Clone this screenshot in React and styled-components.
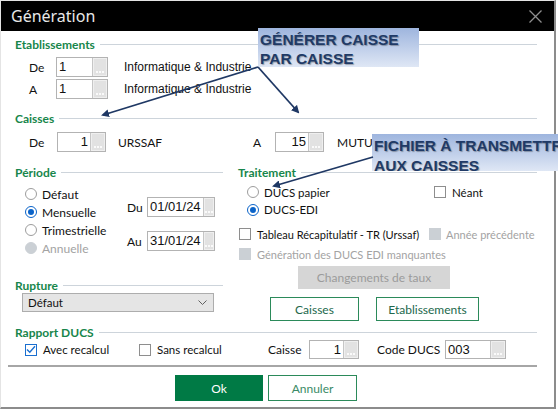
import React from "react";
import styled, { createGlobalStyle } from "styled-components";

const GREEN = "#17864b";

const GlobalStyle = createGlobalStyle`
  html, body {
    margin: 0;
    padding: 0;
    background: #fff;
    overflow: hidden;
  }
  body {
    font-family: Lato, "Noto Sans", sans-serif;
    font-size: 11px;
    color: #111;
  }
  * { box-sizing: border-box; }
`;

const Window = styled.div`
  position: relative;
  width: 556px;
  height: 409px;
  border-top: 1px solid #e4e4e4;
  border-left: 1px solid #e4e4e4;
  border-right: 2px solid #8c8c8c;
  border-bottom: 2px solid #8c8c8c;
  background: #fff;
`;

const TitleBar = styled.div`
  height: 30px;
  background: #000;
  display: flex;
  align-items: center;
  justify-content: space-between;
  padding: 0 12px 0 10px;
`;

const Title = styled.div`
  font-family: "Noto Sans", sans-serif;
  font-size: 16px;
  color: #e8e8e8;
`;

const Body = styled.div`
  padding: 6px 17px 0 14px;
`;

const HeaderRow = styled.div`
  display: flex;
  align-items: center;
  height: 14px;
  margin-top: ${(p) => p.$mt || 0}px;
`;

const HeaderText = styled.span`
  font-weight: 700;
  color: ${GREEN};
  font-size: 12px;
`;

const Rule = styled.span`
  flex: 1;
  height: 1px;
  background: #cdd4db;
  margin-left: 5px;
`;

const SectionHeader = ({ title, mt }) => (
  <HeaderRow $mt={mt}>
    <HeaderText>{title}</HeaderText>
    <Rule />
  </HeaderRow>
);

const Row = styled.div`
  display: flex;
  align-items: center;
  height: ${(p) => p.$h || 20}px;
  margin-top: ${(p) => p.$mt || 0}px;
  padding-left: ${(p) => p.$pl || 0}px;
`;

const Cell = styled.div`
  display: flex;
  align-items: center;
  flex: none;
  width: ${(p) => p.$w}px;
  white-space: nowrap;
`;

const Label = styled.span`
  flex: none;
  width: ${(p) => p.$w}px;
  margin-left: ${(p) => p.$ml || 0}px;
  font-size: 12px;
  color: #111;
`;

const Desc = styled.span`
  margin-left: ${(p) => p.$ml || 0}px;
  font-family: ${(p) => (p.$arial ? '"Liberation Sans", Arial, sans-serif' : "inherit")};
  font-size: 12px;
  white-space: nowrap;
`;

const LookupBox = styled.div`
  flex: none;
  display: flex;
  width: ${(p) => p.$w}px;
  height: ${(p) => p.$h || 19}px;
  border: 1px solid #b3b3b3;
  background: #fff;
`;

const LookupValue = styled.div`
  flex: 1;
  padding: 0 2px;
  font-family: "Liberation Sans", Arial, sans-serif;
  font-size: 13px;
  line-height: ${(p) => p.$h - 2}px;
  text-align: ${(p) => p.$align};
  color: #111;
`;

const LookupBtn = styled.div`
  width: 15px;
  background: #e2e2e2;
  border-left: 1px solid #c6c6c6;
  box-shadow: inset 0 0 0 1px #efefef;
  display: flex;
  align-items: flex-end;
  justify-content: center;
  padding-bottom: 3px;
  gap: 1px;
`;

const Dot = styled.span`
  width: 2px;
  height: 2px;
  background: #fafafa;
`;

const Lookup = ({ value, w, h = 19, align = "left" }) => (
  <LookupBox $w={w} $h={h}>
    <LookupValue $h={h} $align={align}>{value}</LookupValue>
    <LookupBtn>
      <Dot />
      <Dot />
      <Dot />
    </LookupBtn>
  </LookupBox>
);

const Option = styled.div`
  display: flex;
  align-items: center;
  gap: ${(p) => p.$gap || 5}px;
  height: ${(p) => p.$h || 18}px;
  font-size: ${(p) => p.$fs || 11.5}px;
  color: ${(p) => (p.$disabled ? "#a3a3a3" : "#111")};
  white-space: nowrap;
`;

const RadioCircle = styled.span`
  flex: none;
  width: 12px;
  height: 12px;
  border-radius: 50%;
  border: 1px solid ${(p) => (p.$disabled ? "#cbd0d5" : p.$checked ? "#0a63c9" : "#9d9d9d")};
  background: ${(p) => (p.$disabled ? "#cbd0d5" : "#fff")};
  display: flex;
  align-items: center;
  justify-content: center;
  &::after {
    content: "";
    width: 6px;
    height: 6px;
    border-radius: 50%;
    background: ${(p) => (p.$checked ? "#0a63c9" : "transparent")};
  }
`;

const Radio = ({ label, checked, disabled, h, fs }) => (
  <Option $disabled={disabled} $h={h} $fs={fs}>
    <RadioCircle $checked={checked} $disabled={disabled} />
    {label}
  </Option>
);

const CheckBox = styled.span`
  flex: none;
  width: 12px;
  height: 12px;
  border: 1px solid ${(p) => (p.$disabled ? "#cbd0d5" : p.$checked ? "#1a6fd0" : "#8e8e8e")};
  background: ${(p) => (p.$disabled ? "#cbd0d5" : "#fff")};
  display: flex;
  align-items: center;
  justify-content: center;
`;

const Check = ({ label, checked, disabled, gap = 6, fs }) => (
  <Option $disabled={disabled} $gap={gap} $fs={fs}>
    <CheckBox $checked={checked} $disabled={disabled}>
      {checked && (
        <svg width="10" height="9" viewBox="0 0 10 9">
          <path d="M1 4.5 L3.8 7.3 L9 1.2" fill="none" stroke="#1a6fd0" strokeWidth="1.4" />
        </svg>
      )}
    </CheckBox>
    {label}
  </Option>
);

const Columns = styled.div`
  display: grid;
  grid-template-columns: 208px 1fr;
  column-gap: 15px;
  margin-top: 13px;
`;

const Col = styled.div`
  display: flex;
  flex-direction: column;
`;

const PeriodRow = styled.div`
  display: flex;
  margin-top: 6px;
`;

const RadioList = styled.div`
  width: 112px;
  padding-left: 10px;
`;

const DateFields = styled.div`
  display: flex;
  flex-direction: column;
  gap: 14px;
  margin-top: 12px;
`;

const Select = styled.div`
  margin: 1px 0 0 7px;
  width: 192px;
  height: 19px;
  background: #e5e5e5;
  border: 1px solid #adadad;
  display: flex;
  align-items: center;
  justify-content: space-between;
  padding: 0 6px 0 5px;
  font-size: 11.5px;
`;

const Button = styled.button`
  flex: none;
  width: ${(p) => p.$w}px;
  height: ${(p) => p.$h}px;
  padding: 0;
  font-family: inherit;
  font-size: 12px;
  border: 1px solid
    ${(p) => (p.$kind === "primary" ? "#007a45" : p.$kind === "disabled" ? "#d6d6d6" : "#2b8a5a")};
  background: ${(p) => (p.$kind === "primary" ? "#007a45" : p.$kind === "disabled" ? "#d6d6d6" : "#fff")};
  color: ${(p) =>
    p.$kind === "primary" ? "#fff" : p.$kind === "disabled" ? "#9b9b9b" : p.$kind === "soft" ? "#3a8a66" : "#22684c"};
`;

const ButtonRow = styled.div`
  display: flex;
  margin-top: ${(p) => p.$mt || 0}px;
  padding-left: ${(p) => p.$pl || 0}px;
  gap: ${(p) => p.$gap || 0}px;
`;

const Separator = styled.div`
  margin: 6px 0 0 -7px;
  height: 2px;
  background: #a6a6a6;
`;

const Callout = styled.div`
  position: absolute;
  left: ${(p) => p.$x - 1}px;
  top: ${(p) => p.$y - 1}px;
  width: ${(p) => p.$w}px;
  height: ${(p) => p.$h}px;
  background: linear-gradient(#9eb5de, #dfe7f5);
  font-family: "Liberation Sans", Arial, sans-serif;
  font-weight: 700;
  font-size: 15.5px;
  line-height: ${(p) => p.$lh}px;
  color: #203a66;
  text-shadow: 1px 1px 1px rgba(0, 0, 0, 0.3);
  padding: 2px 0 0 2px;
  white-space: nowrap;
  overflow: hidden;
`;

const Arrows = styled.svg`
  position: absolute;
  left: -1px;
  top: -1px;
  width: 558px;
  height: 410px;
  pointer-events: none;
  overflow: visible;
`;

const App = () => (
  <>
    <GlobalStyle />
    <Window>
      <TitleBar>
        <Title>Génération</Title>
        <svg width="13" height="13" viewBox="0 0 13 13">
          <path d="M0.5 0.5 L12.5 12.5 M12.5 0.5 L0.5 12.5" stroke="#8f8f8f" strokeWidth="1.3" />
        </svg>
      </TitleBar>

      <Body>
        <SectionHeader title="Etablissements" />
        <Row $mt={6} $pl={14}>
          <Label $w={27}>De</Label>
          <Lookup value="1" w={52} h={20} />
          <Desc $ml={16} $arial>Informatique &amp; Industrie</Desc>
        </Row>
        <Row $mt={2} $pl={14}>
          <Label $w={27}>A</Label>
          <Lookup value="1" w={52} h={20} />
          <Desc $ml={16} $arial>Informatique &amp; Industrie</Desc>
        </Row>

        <SectionHeader title="Caisses" mt={12} />
        <Row $mt={7} $pl={14}>
          <Cell $w={224}>
            <Label $w={28}>De</Label>
            <Lookup value="1" w={49} h={20} align="right" />
            <Desc $ml={12}>URSSAF</Desc>
          </Cell>
          <Label $w={22}>A</Label>
          <Lookup value="15" w={49} h={20} align="right" />
          <Desc $ml={13}>MUTUELLE</Desc>
        </Row>

        <Columns>
          <Col>
            <SectionHeader title="Période" />
            <PeriodRow>
              <RadioList>
                <Radio label="Défaut" fs={12} />
                <Radio label="Mensuelle" checked fs={12} />
                <Radio label="Trimestrielle" fs={12} />
                <Radio label="Annuelle" disabled fs={12} />
              </RadioList>
              <DateFields>
                <Row>
                  <Label $w={20}>Du</Label>
                  <Lookup value="01/01/24" w={68} h={20} />
                </Row>
                <Row>
                  <Label $w={20}>Au</Label>
                  <Lookup value="31/01/24" w={68} h={20} />
                </Row>
              </DateFields>
            </PeriodRow>
            <SectionHeader title="Rupture" mt={21} />
            <Select>
              <span>Défaut</span>
              <svg width="9" height="5" viewBox="0 0 9 5">
                <path d="M0.5 0.5 L4.5 4.5 L8.5 0.5" fill="none" stroke="#606060" strokeWidth="1" />
              </svg>
            </Select>
          </Col>

          <Col>
            <SectionHeader title="Traitement" />
            <Row $mt={4} $h={18} $pl={9}>
              <Cell $w={187}>
                <Radio label="DUCS papier" />
              </Cell>
              <Check label="Néant" />
            </Row>
            <Row $h={17} $pl={9}>
              <Radio label="DUCS-EDI" checked h={17} />
            </Row>
            <Row $mt={7} $h={18} $pl={1}>
              <Cell $w={190}>
                <Check label="Tableau Récapitulatif - TR (Urssaf)" fs={11} />
              </Cell>
              <Check label="Année précédente" disabled gap={5} fs={11} />
            </Row>
            <Row $mt={2} $h={18} $pl={1}>
              <Check label="Génération des DUCS EDI manquantes" disabled fs={11} />
            </Row>
            <ButtonRow $mt={3} $pl={60}>
              <Button $kind="disabled" $w={152} $h={23}>
                Changements de taux
              </Button>
            </ButtonRow>
            <ButtonRow $mt={8} $pl={32} $gap={17}>
              <Button $w={89} $h={24}>Caisses</Button>
              <Button $w={103} $h={24}>Etablissements</Button>
            </ButtonRow>
          </Col>
        </Columns>

        <SectionHeader title="Rapport DUCS" mt={4} />
        <Row $mt={1} $h={19} $pl={10}>
          <Cell $w={114}>
            <Check label="Avec recalcul" checked />
          </Cell>
          <Cell $w={129}>
            <Check label="Sans recalcul" />
          </Cell>
          <Label $w={41}>Caisse</Label>
          <Lookup value="1" w={50} align="right" />
          <Label $w={68} $ml={18}>Code DUCS</Label>
          <Lookup value="003" w={61} />
        </Row>

        <Separator />

        <ButtonRow $mt={8} $pl={160} $gap={5}>
          <Button $kind="primary" $w={88} $h={26}>Ok</Button>
          <Button $kind="soft" $w={89} $h={26}>Annuler</Button>
        </ButtonRow>
      </Body>

      <Callout $x={258} $y={28} $w={161} $h={39} $lh={19}>
        GÉNÉRER CAISSE
        <br />
        PAR CAISSE
      </Callout>
      <Callout $x={372} $y={134} $w={186} $h={37} $lh={20}>
        FICHIER À TRANSMETTRE
        <br />
        AUX CAISSES
      </Callout>

      <Arrows viewBox="0 0 558 410">
        <defs>
          <marker id="head" markerWidth="8" markerHeight="8" refX="6" refY="4" orient="auto" markerUnits="userSpaceOnUse">
            <path d="M0 0 L8 4 L0 8 Z" fill="#1f3864" />
          </marker>
        </defs>
        <g stroke="#1f3864" strokeWidth="1.8" fill="none">
          <line x1="258" y1="67" x2="103" y2="115" markerEnd="url(#head)" />
          <line x1="258" y1="67" x2="298" y2="112" markerEnd="url(#head)" />
          <line x1="373" y1="157" x2="274" y2="186" markerEnd="url(#head)" />
        </g>
      </Arrows>
    </Window>
  </>
);

export default App;
